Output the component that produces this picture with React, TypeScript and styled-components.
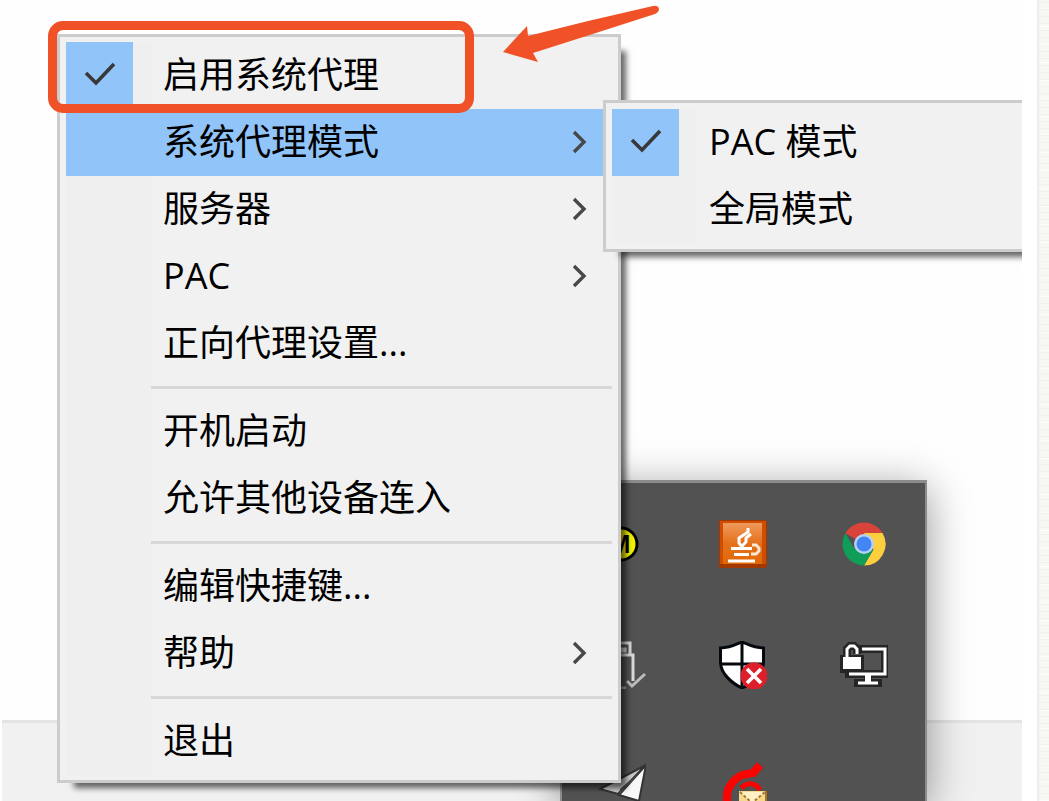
import React from "react";
import styled, { createGlobalStyle } from "styled-components";

const GlobalStyle = createGlobalStyle`
  * { box-sizing: border-box; }
  body {
    margin: 0;
    background: #ffffff;
    font-family: "Open Sans", "Noto Sans CJK SC", sans-serif;
  }
`;

const Page = styled.div`
  display: flex;
  min-height: 100vh;
  overflow: hidden;
`;

const Desktop = styled.main`
  position: relative;
  flex: 1;
  display: flex;
  align-items: flex-start;
  min-width: 0;
  margin: 0 15px 0 2px;
  padding: 34px 0 18px 55px;
  overflow: hidden;
  background: #fefefe;
`;

const PaperEdge = styled.aside`
  width: 12px;
  background-color: #f7f7f3;
  background-image:
    linear-gradient(90deg, #ecece8, rgba(247, 247, 243, 0) 4px),
    repeating-linear-gradient(0deg, #fcfcfa 0 1px, transparent 1px 18px),
    repeating-linear-gradient(0deg, #f2f2ec 0 1px, transparent 1px 7px);
`;

const Taskbar = styled.div`
  position: absolute;
  left: 0;
  right: 0;
  bottom: 0;
  height: 81px;
  border-top: 3px solid #e4e4e4;
  background: #f1f1f1;
`;

const Tray = styled.section`
  position: absolute;
  top: 480px;
  bottom: 0;
  left: 558px;
  display: grid;
  grid-template-columns: repeat(3, 121px);
  grid-auto-rows: 121px;
  border: 2px solid #8c8c8c;
  border-top-width: 3px;
  border-bottom: 0;
  background: #525252;
  box-shadow: 0 8px 40px rgba(0, 0, 0, 0.42);
`;

const TrayButton = styled.button`
  display: flex;
  align-items: center;
  justify-content: center;
  padding: 0 2px 0 0;
  border: 0;
  background: none;
`;

const MenuPanel = styled.div`
  border: 3px solid #cccccc;
  background: #f1f1f1;
  box-shadow: 11px 11px 6px -6px rgba(0, 0, 0, 0.6);
`;

const MainMenu = styled(MenuPanel)`
  position: relative;
  width: 564px;
  padding: 5px 6px;
`;

const SubMenu = styled(MenuPanel)`
  position: absolute;
  top: -9px;
  left: 537px;
  z-index: 1;
  width: 480px;
  padding: 6px;
`;

const RowWrap = styled.div`
  position: relative;
`;

const Row = styled.button<{ $active?: boolean }>`
  display: grid;
  grid-template-columns: 67px 18px 1fr 32px;
  align-items: center;
  width: 100%;
  height: 67px;
  padding: 0 9px 0 0;
  border: 0;
  background: ${(p) =>
    p.$active ? "#91c4f9" : "linear-gradient(90deg, #efefef 85px, #f1f1f1 85px)"};
  color: #000000;
  font: inherit;
  font-size: 36px;
  line-height: 48px;
  text-align: left;
  white-space: nowrap;
`;

const Gutter = styled.span<{ $checked?: boolean }>`
  display: flex;
  align-items: center;
  justify-content: center;
  align-self: stretch;
  padding-bottom: 4px;
  background: ${(p) => (p.$checked ? "#91c4f9" : "transparent")};
`;

const Label = styled.span`
  grid-column: 3;
  padding: 0 0 2px 12px;
`;

const Separator = styled.hr`
  height: 21px;
  margin: 0;
  border: 0;
  background:
    linear-gradient(#d7d7d7, #d7d7d7) 85px 9px / 100% 3px no-repeat,
    linear-gradient(90deg, #efefef 85px, #f1f1f1 85px);
`;

const Highlight = styled.div`
  position: absolute;
  top: 21px;
  left: 46px;
  z-index: 2;
  width: 426px;
  height: 92px;
  border: 9px solid #f05127;
  border-radius: 15px;
  pointer-events: none;
`;

const Arrow = styled.svg`
  position: absolute;
  top: 0;
  left: 498px;
  z-index: 2;
  pointer-events: none;
`;

const CheckMark = () => (
  <svg width="34" height="28" viewBox="0 0 34 28" fill="none" aria-hidden="true">
    <path d="M3 13 L13 23 L31 4" stroke="#383838" strokeWidth="3.6" />
  </svg>
);

const Chevron = () => (
  <svg width="16" height="26" viewBox="0 0 16 26" fill="none" aria-hidden="true">
    <path d="M3 2 L13 12 L3 22" stroke="#484848" strokeWidth="3.4" />
  </svg>
);

type ItemProps = {
  label: string;
  checked?: boolean;
  active?: boolean;
  more?: boolean;
};

const Item = ({ label, checked, active, more }: ItemProps) => (
  <Row type="button" $active={active} aria-haspopup={more ? "menu" : undefined}>
    <Gutter $checked={checked}>{checked && <CheckMark />}</Gutter>
    <Label>{label}</Label>
    {more && <Chevron />}
  </Row>
);

const YellowBadge = () => (
  <svg width="48" height="48" viewBox="0 0 48 48" aria-hidden="true">
    <circle cx="23" cy="24" r="16" fill="#f4ee00" stroke="#000" strokeWidth="3" />
    <text x="22" y="33" textAnchor="middle" fontFamily="Liberation Sans" fontWeight="700" fontSize="25">M</text>
  </svg>
);

const JavaIcon = () => (
  <svg width="48" height="48" viewBox="0 0 48 48" fill="none" aria-hidden="true">
    <defs>
      <linearGradient id="java" x1="0" y1="0" x2="0" y2="1">
        <stop offset="0" stopColor="#ee9a5c" />
        <stop offset="0.5" stopColor="#e5701a" />
        <stop offset="1" stopColor="#e06a08" />
      </linearGradient>
    </defs>
    <rect width="48" height="48" rx="2" fill="#a03800" />
    <rect x="1" y="1" width="46" height="43" fill="#cf4d00" />
    <rect x="4" y="3" width="39" height="41" fill="url(#java)" />
    <path d="M29 8 V12 L20 18 V23 L24 28 M32 14 L27 18 V22 L23 26" stroke="#fff" strokeWidth="3" />
    <path d="M12 28.500 H33 M15 34.500 H30 M9 41 H36" stroke="#fff" strokeWidth="3" />
    <path d="M33 25 H37 L40 28 V31 L37 34 H32" stroke="#fbe9d4" strokeWidth="3" />
  </svg>
);

const ChromeIcon = () => (
  <svg width="48" height="48" viewBox="0 0 48 48" aria-hidden="true">
    <path d="M24 24 L5.400 13.300 A21.500 21.500 0 0 1 42.600 13.300 Z" fill="#d8443a" />
    <path d="M24 13 H42.500 A21.500 21.500 0 0 1 24 45.500 L33.500 29.500 Z" fill="#fdcf40" />
    <path d="M5.400 13.300 A21.500 21.500 0 0 0 24 45.500 L33 30 L24 24 L14.500 29 Z" fill="#109d58" />
    <circle cx="24" cy="24" r="10" fill="#b9d0f5" />
    <circle cx="24" cy="24" r="7.500" fill="#4285f4" />
  </svg>
);

const UsbIcon = () => (
  <svg width="48" height="48" viewBox="0 0 48 48" fill="none" aria-hidden="true">
    <path d="M13 14 V2 H32 V14 H20 M23 8 H27 V10 H23 M10 47 V14 H35 V40" stroke="#d8d8d8" strokeWidth="3" />
    <path d="M10 47 H28" stroke="#a8a8a8" strokeWidth="3" />
    <path d="M29 40 L34 45 L47 33" stroke="#bdbdbd" strokeWidth="3" />
  </svg>
);

const ShieldIcon = () => (
  <svg width="48" height="48" viewBox="0 0 48 48" fill="none" aria-hidden="true">
    <path d="M1.500 7 C11 7 18 3 23 1 C28 3 35 7 44.500 7 V22 C44 33 33 43 23 47 C12 42 2 32 1.500 22 Z" fill="#fff" stroke="#05080d" strokeWidth="3" />
    <path d="M23 1 V47 M1 23 H45" stroke="#05080d" strokeWidth="3" />
    <circle cx="35" cy="35" r="13.500" fill="#dc1f2b" />
    <path d="M28 28 L42 42 M42 28 L28 42" stroke="#fff" strokeWidth="3.600" />
  </svg>
);

const LockedScreenIcon = () => (
  <svg width="48" height="48" viewBox="0 0 48 48" fill="none" aria-hidden="true">
    <path d="M22 8 H45 V33 H9 M28 33 V42 M18 42 H38" stroke="#252525" strokeWidth="8" strokeLinecap="square" />
    <rect x="0" y="14" width="24" height="18" fill="#252525" />
    <path d="M22 8 H45 V33 H9 M18 42 H38" stroke="#fff" strokeWidth="3" />
    <path d="M28 33 V42" stroke="#fff" strokeWidth="6" />
    <path d="M7 17 V8 L10 5 H14 L17 8 V13" stroke="#252525" strokeWidth="8" />
    <path d="M7 17 V8 L10 5 H14 L17 8 V13" stroke="#fff" strokeWidth="3" />
    <rect x="3" y="16" width="18" height="12" fill="#fff" />
  </svg>
);

const PaperPlaneIcon = () => (
  <svg width="48" height="48" viewBox="0 0 48 48" aria-hidden="true">
    <path d="M48 3 L2 27 L20 32 Z" fill="#c8c8c8" stroke="#333" strokeWidth="2" />
    <path d="M48 3 L21 33 L41 39 Z" fill="#f8f8f8" stroke="#333" strokeWidth="2" />
    <path d="M42 10 L22 27 L21 34 Z" fill="#454545" />
  </svg>
);

const MailSwirlIcon = () => (
  <svg width="48" height="48" viewBox="0 0 48 48" fill="none" aria-hidden="true">
    <path d="M41 3 L34 11 L23 13 C13 18 8 27 8 34 V46" stroke="#f90400" strokeWidth="8" />
    <path d="M22 26 C28 20 36 20 41 28" stroke="#f90400" strokeWidth="5" />
    <rect x="20" y="29" width="29" height="19" fill="#f5d98c" />
    <path d="M47 29 V48" stroke="#a87520" strokeWidth="2" />
    <path d="M21 30 L33 41 L46 30 Z" fill="#fff1c6" />
    <path d="M21 30 L33 41 L46 30" stroke="#a87a35" strokeWidth="2" strokeDasharray="3 2" />
  </svg>
);

const trayIcons = [
  { name: "徽标", Icon: YellowBadge },
  { name: "Java", Icon: JavaIcon },
  { name: "Chrome", Icon: ChromeIcon },
  { name: "USB", Icon: UsbIcon },
  { name: "安全", Icon: ShieldIcon },
  { name: "屏幕", Icon: LockedScreenIcon },
  { name: "代理", Icon: PaperPlaneIcon },
  { name: "邮件", Icon: MailSwirlIcon },
];

export default function App() {
  return (
    <Page>
      <GlobalStyle />
      <Desktop>
        <Taskbar />
        <Tray>
          {trayIcons.map(({ name, Icon }) => (
            <TrayButton key={name} type="button" aria-label={name}>
              <Icon />
            </TrayButton>
          ))}
        </Tray>
        <MainMenu>
          <Item label="启用系统代理" checked />
          <RowWrap>
            <Item label="系统代理模式" active more />
            <SubMenu>
              <Item label="PAC 模式" checked />
              <Item label="全局模式" />
            </SubMenu>
          </RowWrap>
          <Item label="服务器" more />
          <Item label="PAC" more />
          <Item label="正向代理设置..." />
          <Separator />
          <Item label="开机启动" />
          <Item label="允许其他设备连入" />
          <Separator />
          <Item label="编辑快捷键..." />
          <Item label="帮助" more />
          <Separator />
          <Item label="退出" />
        </MainMenu>
        <Highlight />
        <Arrow width="166" height="70" viewBox="0 0 166 70" aria-hidden="true">
          <path d="M3 52 L27 26 L28 36 Q90 20 153 6 Q158 5 159 9 Q159 12 155 14 Q93 34 33 53 L38 62 Z" fill="#f05127" />
        </Arrow>
      </Desktop>
      <PaperEdge />
    </Page>
  );
}
